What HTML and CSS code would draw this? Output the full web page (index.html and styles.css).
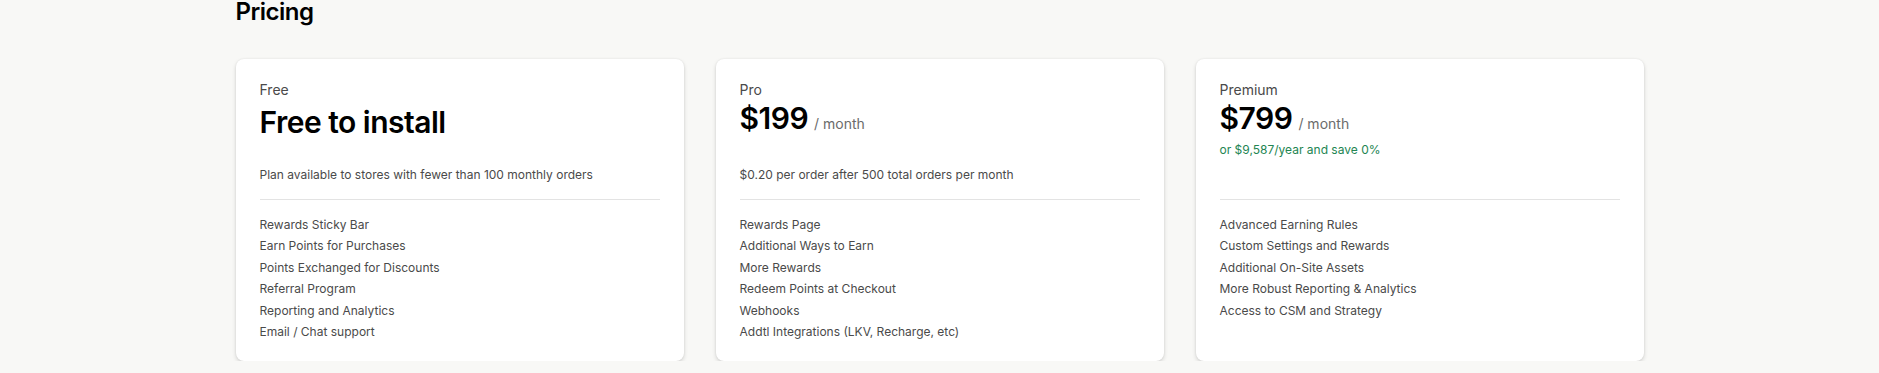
FILE: index.html
```html
<!DOCTYPE html>
<html lang="en">
<head>
<meta charset="utf-8">
<title>Pricing</title>
<link rel="stylesheet" href="styles.css">
</head>
<body>
<main class="page">
  <h1 class="title">Pricing</h1>
  <section class="plans">
    <article class="card">
      <div class="plan-name">Free</div>
      <div class="price-row price-free"><span class="amount">Free to install</span></div>
      <div class="subtitle"></div>
      <p class="desc">Plan available to stores with fewer than 100 monthly orders</p>
      <hr class="divider">
      <ul class="features">
        <li>Rewards Sticky Bar</li>
        <li>Earn Points for Purchases</li>
        <li>Points Exchanged for Discounts</li>
        <li>Referral Program</li>
        <li>Reporting and Analytics</li>
        <li>Email / Chat support</li>
      </ul>
    </article>
    <article class="card">
      <div class="plan-name">Pro</div>
      <div class="price-row"><span class="amount">$199</span><span class="period">/ month</span></div>
      <div class="subtitle"></div>
      <p class="desc">$0.20 per order after 500 total orders per month</p>
      <hr class="divider">
      <ul class="features">
        <li>Rewards Page</li>
        <li>Additional Ways to Earn</li>
        <li>More Rewards</li>
        <li>Redeem Points at Checkout</li>
        <li>Webhooks</li>
        <li>Addtl Integrations (LKV, Recharge, etc)</li>
      </ul>
    </article>
    <article class="card">
      <div class="plan-name">Premium</div>
      <div class="price-row"><span class="amount">$799</span><span class="period">/ month</span></div>
      <div class="subtitle">or $9,587/year and save 0%</div>
      <p class="desc"></p>
      <hr class="divider">
      <ul class="features">
        <li>Advanced Earning Rules</li>
        <li>Custom Settings and Rewards</li>
        <li>Additional On-Site Assets</li>
        <li>More Robust Reporting &amp; Analytics</li>
        <li>Access to CSM and Strategy</li>
      </ul>
    </article>
  </section>
</main>
</body>
</html>
```

FILE: styles.css
```css
* { box-sizing: border-box; }
html, body { margin: 0; padding: 0; }
body {
  background: #f8f8f6;
  font-family: Inter, "Noto Sans", "Liberation Sans", sans-serif;
  color: #303030;
  overflow: hidden;
}
.page {
  width: 1408px;
  margin: 0 auto;
}
.title {
  margin: 0 0 37px;
  padding-top: 2px;
  font-size: 24px;
  line-height: 20px;
  font-weight: 600;
  letter-spacing: -0.5px;
  color: #000;
}
.plans {
  display: grid;
  grid-template-columns: repeat(3, 448px);
  gap: 32px;
}
.card {
  background: #fff;
  border-radius: 8px;
  box-shadow: 0 2px 4px rgba(0,0,0,0.15), 0 0 2px rgba(0,0,0,0.08);
  padding: 21px 24px 18px;
  display: flex;
  flex-direction: column;
  height: 302px;
}
.plan-name {
  font-size: 14px;
  line-height: 20px;
  color: #4a4a4a;
}
.price-row {
  margin-top: 0;
  display: flex;
  align-items: baseline;
  gap: 6px;
  height: 36px;
}
.price-free { padding-top: 4px; }
.amount {
  font-size: 30px;
  line-height: 36px;
  font-weight: 600;
  letter-spacing: -0.5px;
  color: #000;
}
.period {
  font-size: 14px;
  color: #6b6b6b;
}
.subtitle {
  margin-top: 4px;
  font-size: 12px;
  line-height: 20px;
  min-height: 20px;
  color: #238552;
}
.desc {
  margin: 5px 0 0;
  font-size: 12px;
  line-height: 20px;
  min-height: 20px;
  color: #4a4a4a;
}
.divider {
  margin: 14px 0 0;
  border: 0;
  border-top: 1px solid #e3e3e3;
  height: 0;
}
.features {
  list-style: none;
  margin: 14px 0 0;
  padding: 0;
}
.features li {
  font-size: 12px;
  line-height: 21.4px;
  color: #4a4a4a;
}
```
